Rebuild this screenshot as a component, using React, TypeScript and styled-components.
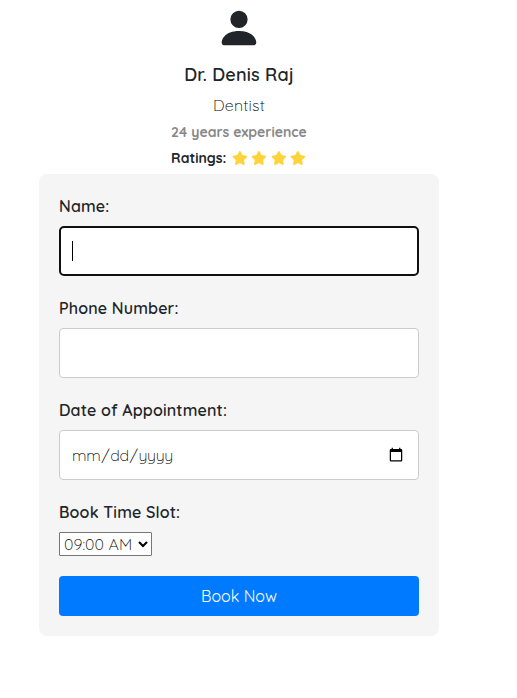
import React from "react";
import styled, { createGlobalStyle } from "styled-components";
import { BsPersonFill } from "react-icons/bs";
import { FaStar } from "react-icons/fa";

const GlobalStyle = createGlobalStyle`
  * { box-sizing: border-box; }
  body {
    margin: 0;
    background: #fff;
    color: #212529;
    font-family: Quicksand, Lato, "Open Sans", sans-serif;
    font-size: 16px;
    line-height: 24px;
  }
`;

const Page = styled.main`
  width: 400px;
  margin-left: 39px;
  padding-top: 5px;
`;

const Profile = styled.header`
  display: flex;
  flex-direction: column;
  align-items: center;
  height: 169px;
`;

const Avatar = styled(BsPersonFill)`
  width: 46px;
  height: 46px;
  margin-bottom: 11px;
`;

const Line = styled.div<{ $size: number; $weight: number; $height: number; $spacing?: number; $color?: string }>`
  height: ${(p) => p.$height}px;
  line-height: ${(p) => p.$height}px;
  font-size: ${(p) => p.$size}px;
  font-weight: ${(p) => p.$weight};
  letter-spacing: ${(p) => p.$spacing ?? 0}px;
  color: ${(p) => p.$color ?? "#212529"};
  white-space: nowrap;
`;

const Ratings = styled.div`
  display: flex;
  align-items: center;
  width: 136px;
  height: 32px;
`;

const Stars = styled.div`
  display: flex;
  gap: 3.5px;
  margin-left: auto;
  padding-right: 1.5px;
  color: #ffd43b;
  svg { width: 15.75px; height: 14px; }
`;

const Card = styled.form`
  height: 462px;
  padding: 20px;
  border-radius: 8px;
  background: #f5f5f5;
`;

const Field = styled.div`
  position: relative;
  margin-bottom: 20px;
`;

const Label = styled.label`
  display: block;
  height: 24px;
  margin-bottom: 8px;
  font-weight: 600;
  letter-spacing: 0.15px;
`;

const Input = styled.input<{ $active?: boolean }>`
  display: block;
  width: 100%;
  height: 50px;
  padding: 10px 12px 10px 11px;
  border: ${(p) => (p.$active ? "2px solid #101010" : "1px solid #ccc")};
  border-radius: ${(p) => (p.$active ? 5 : 4)}px;
  outline: none;
  background: #fff;
  color: #000;
  font: 300 16px Quicksand, Lato, sans-serif;
  letter-spacing: -0.35px;
`;

const Caret = styled.span`
  position: absolute;
  left: 13px;
  bottom: 15px;
  width: 1px;
  height: 20px;
  background: #000;
`;

const Select = styled.select`
  display: block;
  width: 93px;
  height: 24px;
  padding: 0;
  border: 1px solid #767676;
  border-radius: 1px;
  background: #fff;
  color: #000;
  font: 300 16px Quicksand, Lato, sans-serif;
  letter-spacing: 0.1px;
`;

const Submit = styled.button`
  display: block;
  width: 100%;
  height: 40px;
  padding: 0;
  border: 0;
  border-radius: 4px;
  background: #007bff;
  color: #fff;
  font: 400 16px Quicksand, Lato, sans-serif;
`;

export default function App() {
  return (
    <>
      <GlobalStyle />
      <Page>
        <Profile>
          <Avatar />
          <Line $size={18} $weight={600} $height={26} $spacing={0.15}>Dr. Denis Raj</Line>
          <Line $size={16} $weight={300} $height={34} $spacing={0.2} $color="#000">Dentist</Line>
          <Line $size={14} $weight={700} $height={20} $color="#888">24 years experience</Line>
          <Ratings>
            <Line $size={14} $weight={700} $height={26}>Ratings:</Line>
            <Stars>
              {[1, 2, 3, 4].map((n) => <FaStar key={n} />)}
            </Stars>
          </Ratings>
        </Profile>
        <Card>
          <Field>
            <Label htmlFor="name">Name:</Label>
            <Input id="name" type="text" $active />
            <Caret />
          </Field>
          <Field>
            <Label htmlFor="phone">Phone Number:</Label>
            <Input id="phone" type="tel" />
          </Field>
          <Field>
            <Label htmlFor="date">Date of Appointment:</Label>
            <Input id="date" type="date" />
          </Field>
          <Field>
            <Label htmlFor="slot">Book Time Slot:</Label>
            <Select id="slot" defaultValue="09:00 AM">
              <option>09:00 AM</option>
              <option>10:00 AM</option>
              <option>11:00 AM</option>
            </Select>
          </Field>
          <Submit type="button">Book Now</Submit>
        </Card>
      </Page>
    </>
  );
}
